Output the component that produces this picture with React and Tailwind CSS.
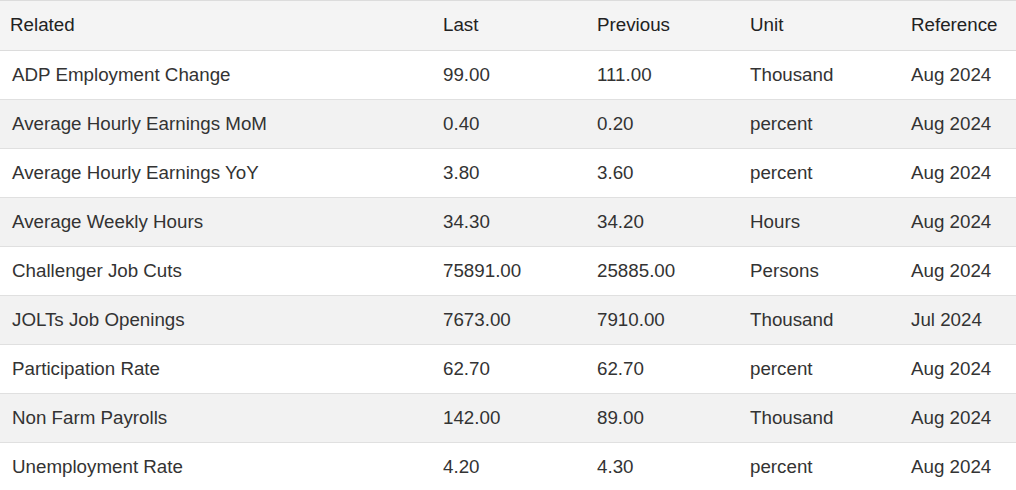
import React from "react";

const rows = [
  ["ADP Employment Change", "99.00", "111.00", "Thousand", "Aug 2024"],
  ["Average Hourly Earnings MoM", "0.40", "0.20", "percent", "Aug 2024"],
  ["Average Hourly Earnings YoY", "3.80", "3.60", "percent", "Aug 2024"],
  ["Average Weekly Hours", "34.30", "34.20", "Hours", "Aug 2024"],
  ["Challenger Job Cuts", "75891.00", "25885.00", "Persons", "Aug 2024"],
  ["JOLTs Job Openings", "7673.00", "7910.00", "Thousand", "Jul 2024"],
  ["Participation Rate", "62.70", "62.70", "percent", "Aug 2024"],
  ["Non Farm Payrolls", "142.00", "89.00", "Thousand", "Aug 2024"],
  ["Unemployment Rate", "4.20", "4.30", "percent", "Aug 2024"],
];

export default function App() {
  return (
    <div className="w-[1016px] h-[490px] overflow-hidden bg-white" style={{ fontFamily: '"Liberation Sans", Arial, sans-serif' }}>
      <table className="w-[1016px] table-fixed border-collapse text-[18.75px] text-[#333]">
        <colgroup>
          <col className="w-[432px]" />
          <col className="w-[154px]" />
          <col className="w-[153px]" />
          <col className="w-[161px]" />
          <col className="w-[116px]" />
        </colgroup>
        <thead>
          <tr className="h-[50px] bg-[#f4f4f4] border-t border-[#dcdcdc]">
            {["Related", "Last", "Previous", "Unit", "Reference"].map((h, i) => (
              <th key={h} className={`font-normal text-left align-middle border-b border-[#dcdcdc] text-[#222] whitespace-nowrap ${i === 0 ? "pl-[10px]" : "pl-[11px]"}`}>
                {h}
              </th>
            ))}
          </tr>
        </thead>
        <tbody>
          {rows.map((r, ri) => (
            <tr key={ri} className={`h-[49px] ${ri % 2 === 1 ? "bg-[#f2f2f2]" : "bg-white"}`}>
              {r.map((c, ci) => (
                <td key={ci} className={`align-middle border-b border-[#e0e0e0] whitespace-nowrap ${ci === 0 ? "pl-[12px]" : "pl-[11px]"}`}>
                  {c}
                </td>
              ))}
            </tr>
          ))}
        </tbody>
      </table>
    </div>
  );
}
